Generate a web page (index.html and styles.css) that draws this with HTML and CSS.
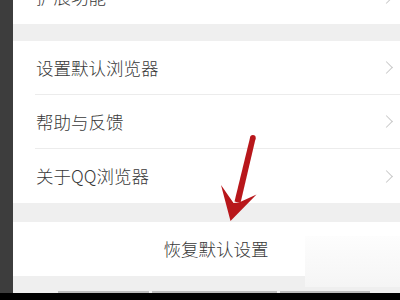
FILE: index.html
```html
<!DOCTYPE html>
<html lang="zh-CN">
<head>
<meta charset="utf-8">
<title>设置</title>
<link rel="stylesheet" href="styles.css">
</head>
<body>
<div class="screen">
  <div class="rail"></div>
  <div class="main">
    <div class="group group-top">
      <div class="row"><div class="row-inner"><span class="label">扩展功能</span><span class="chev"></span></div></div>
    </div>
    <div class="group">
      <div class="row"><div class="row-inner sep"><span class="label">设置默认浏览器</span><span class="chev"></span></div></div>
      <div class="row"><div class="row-inner sep"><span class="label">帮助与反馈</span><span class="chev"></span></div></div>
      <div class="row"><div class="row-inner"><span class="label">关于QQ浏览器</span><span class="chev"></span></div></div>
    </div>
    <div class="group reset">
      <span class="reset-text">恢复默认设置</span>
      <div class="watermark"></div>
    </div>
    <div class="tabbar">
      <div class="tab t1"></div>
      <div class="tab t2"></div>
      <div class="tab t3"></div>
    </div>
    <svg class="arrow" width="400" height="300" viewBox="0 0 400 300">
      <polygon points="250.2,137 255.6,138.6 240.5,203 234.5,201.5" fill="#b8171b"/>
      <circle cx="252.9" cy="137.8" r="2.8" fill="#b8171b"/>
      <polygon points="221,185 230.5,221 256.5,194.5 239,202.5 233.5,203" fill="#b8171b"/>
    </svg>
  </div>
</div>
</body>
</html>
```
FILE: styles.css
```css
html, body {
  margin: 0;
  padding: 0;
  background: #000;
  width: 400px;
  height: 300px;
  overflow: hidden;
  font-family: "Noto Sans CJK SC", "Noto Sans", sans-serif;
}
.screen {
  display: flex;
  height: 293px;
  overflow: hidden;
}
.rail {
  width: 13px;
  flex: none;
  background: #3d3d3d;
}
.main {
  flex: 1;
  position: relative;
  background: #efefef;
  display: flex;
  flex-direction: column;
}
.group {
  background: #fff;
}
.group-top {
  margin-top: -30px;
  margin-bottom: 17px;
}
.row {
  height: 54px;
  padding-left: 22px;
  box-sizing: border-box;
}
.row-inner {
  height: 54px;
  box-sizing: border-box;
  display: flex;
  align-items: center;
  justify-content: space-between;
  padding-right: 7px;
  padding-left: 1px;
}
.row-inner.sep {
  border-bottom: 1px solid #ececec;
}
.label {
  font-size: 17.5px;
  font-weight: 300;
  color: #383838;
  line-height: 1;
}
.chev {
  width: 8px;
  height: 8px;
  border-top: 1.4px solid #c9c9c9;
  border-right: 1.4px solid #c9c9c9;
  transform: rotate(45deg);
  margin-right: 2px;
}
.reset {
  margin-top: 19px;
  height: 54px;
  display: flex;
  align-items: center;
  justify-content: center;
  padding-left: 19px;
  position: relative;
}
.reset-text {
  font-size: 17.5px;
  font-weight: 300;
  color: #383838;
  line-height: 1;
}
.watermark {
  position: absolute;
  right: 0;
  top: 14px;
  width: 95px;
  height: 51px;
  background: linear-gradient(180deg, #fdfdfd, #f5f5f5);
}
.tabbar {
  flex: 1;
  display: flex;
  align-items: flex-end;
  gap: 3px;
  padding-left: 45px;
  background: #efefef;
}
.tab {
  height: 2px;
  background: #bdbdbd;
}
.t1 { width: 91px; }
.t2 { width: 125px; }
.t3 { width: 90px; }
.arrow {
  position: absolute;
  left: -13px;
  top: 0;
  pointer-events: none;
}
```
